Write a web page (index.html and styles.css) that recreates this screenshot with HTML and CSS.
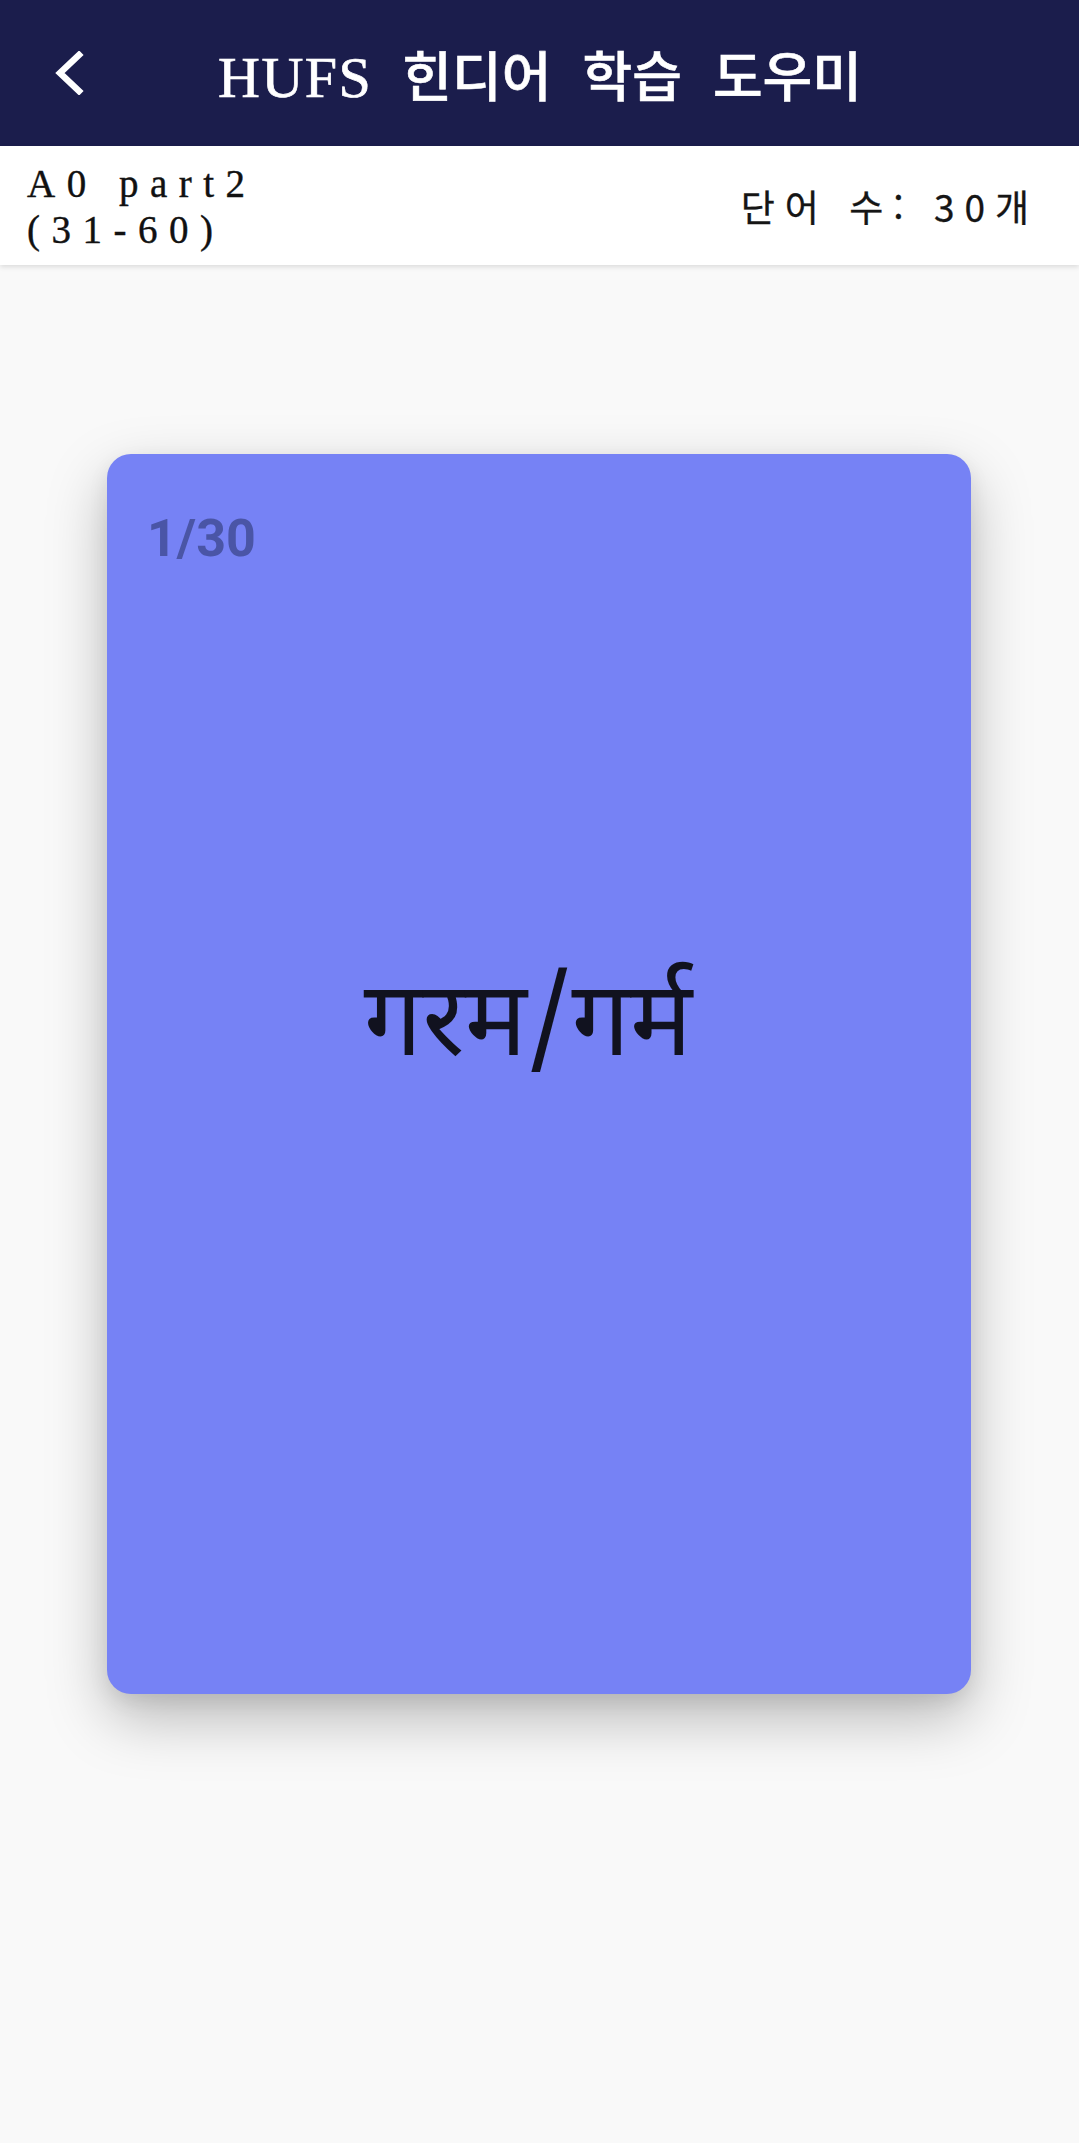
FILE: index.html
```
<!DOCTYPE html>
<html lang="ko">
<head>
<meta charset="utf-8">
<title>HUFS 힌디어 학습 도우미</title>
<link rel="stylesheet" href="styles.css">
</head>
<body>
<header class="appbar">
  <svg class="back" width="34" height="44" viewBox="0 0 34 44"><polyline points="27,4 8,22 27,40" fill="none" stroke="#ffffff" stroke-width="6.5" stroke-linecap="square" stroke-linejoin="miter"/></svg>
  <h1 class="title"><span class="title-latin">HUFS</span><span class="title-ko">힌디어 학습 도우미</span></h1>
</header>
<div class="subbar">
  <div class="set-name">A0 part2<br>(31-60)</div>
  <div class="word-count">단어 수: 30개</div>
</div>
<main class="stage">
  <section class="card">
    <div class="counter">1/30</div>
    <div class="word">गरम/गर्म</div>
  </section>
</main>
</body>
</html>
```
FILE: styles.css
```
html, body {
  margin: 0;
  padding: 0;
}
body {
  background: #f9f9f9;
  width: 1079px;
  min-height: 2143px;
  font-family: "Noto Sans CJK KR", "Noto Sans", sans-serif;
}
.appbar {
  height: 146px;
  background: #1b1d4c;
  display: flex;
  align-items: center;
  padding-left: 52px;
  box-sizing: border-box;
}
.back {
  display: block;
}
.title {
  margin: 0 0 0 132px;
  font-weight: normal;
  color: #ffffff;
  display: flex;
  align-items: baseline;
  white-space: nowrap;
}
.title-latin {
  font-family: "Liberation Serif", serif;
  font-size: 58px;
  letter-spacing: 1.5px;
  -webkit-text-stroke: 0.7px #ffffff;
}
.title-ko {
  font-family: "Noto Sans CJK KR", sans-serif;
  font-weight: 500;
  font-size: 54px;
  word-spacing: 16px;
  margin-left: 30px;
  -webkit-text-stroke: 0.6px #ffffff;
}
.subbar {
  height: 119px;
  background: #ffffff;
  display: flex;
  align-items: center;
  justify-content: space-between;
  padding: 0 40px 0 27px;
  box-shadow: 0 2px 5px rgba(0, 0, 0, 0.12);
  position: relative;
}
.set-name {
  font-family: "Liberation Serif", serif;
  font-size: 39px;
  line-height: 46px;
  letter-spacing: 11.5px;
  color: #111111;
  -webkit-text-stroke: 0.4px #111111;
  padding-top: 2px;
}
.word-count {
  font-family: "Noto Sans CJK KR", sans-serif;
  font-weight: normal;
  font-size: 37px;
  letter-spacing: 10px;
  color: #151515;
  -webkit-text-stroke: 0.3px #151515;
}
.stage {
  padding: 189px 0 0 107px;
}
.card {
  width: 864px;
  height: 1240px;
  box-sizing: border-box;
  background: #7682f5;
  border-radius: 24px;
  box-shadow: 0 24px 60px rgba(0, 0, 0, 0.26), 0 8px 20px rgba(0, 0, 0, 0.08);
  padding: 54px 40px 0;
}
.counter {
  font-family: Roboto, sans-serif;
  font-weight: bold;
  font-size: 52px;
  color: #4a55a6;
}
.word {
  margin-top: 399px;
  padding-right: 22px;
  text-align: center;
  font-family: "Noto Sans Devanagari", "Noto Sans", sans-serif;
  font-size: 104px;
  line-height: 1.2;
  color: #11121f;
}
```
